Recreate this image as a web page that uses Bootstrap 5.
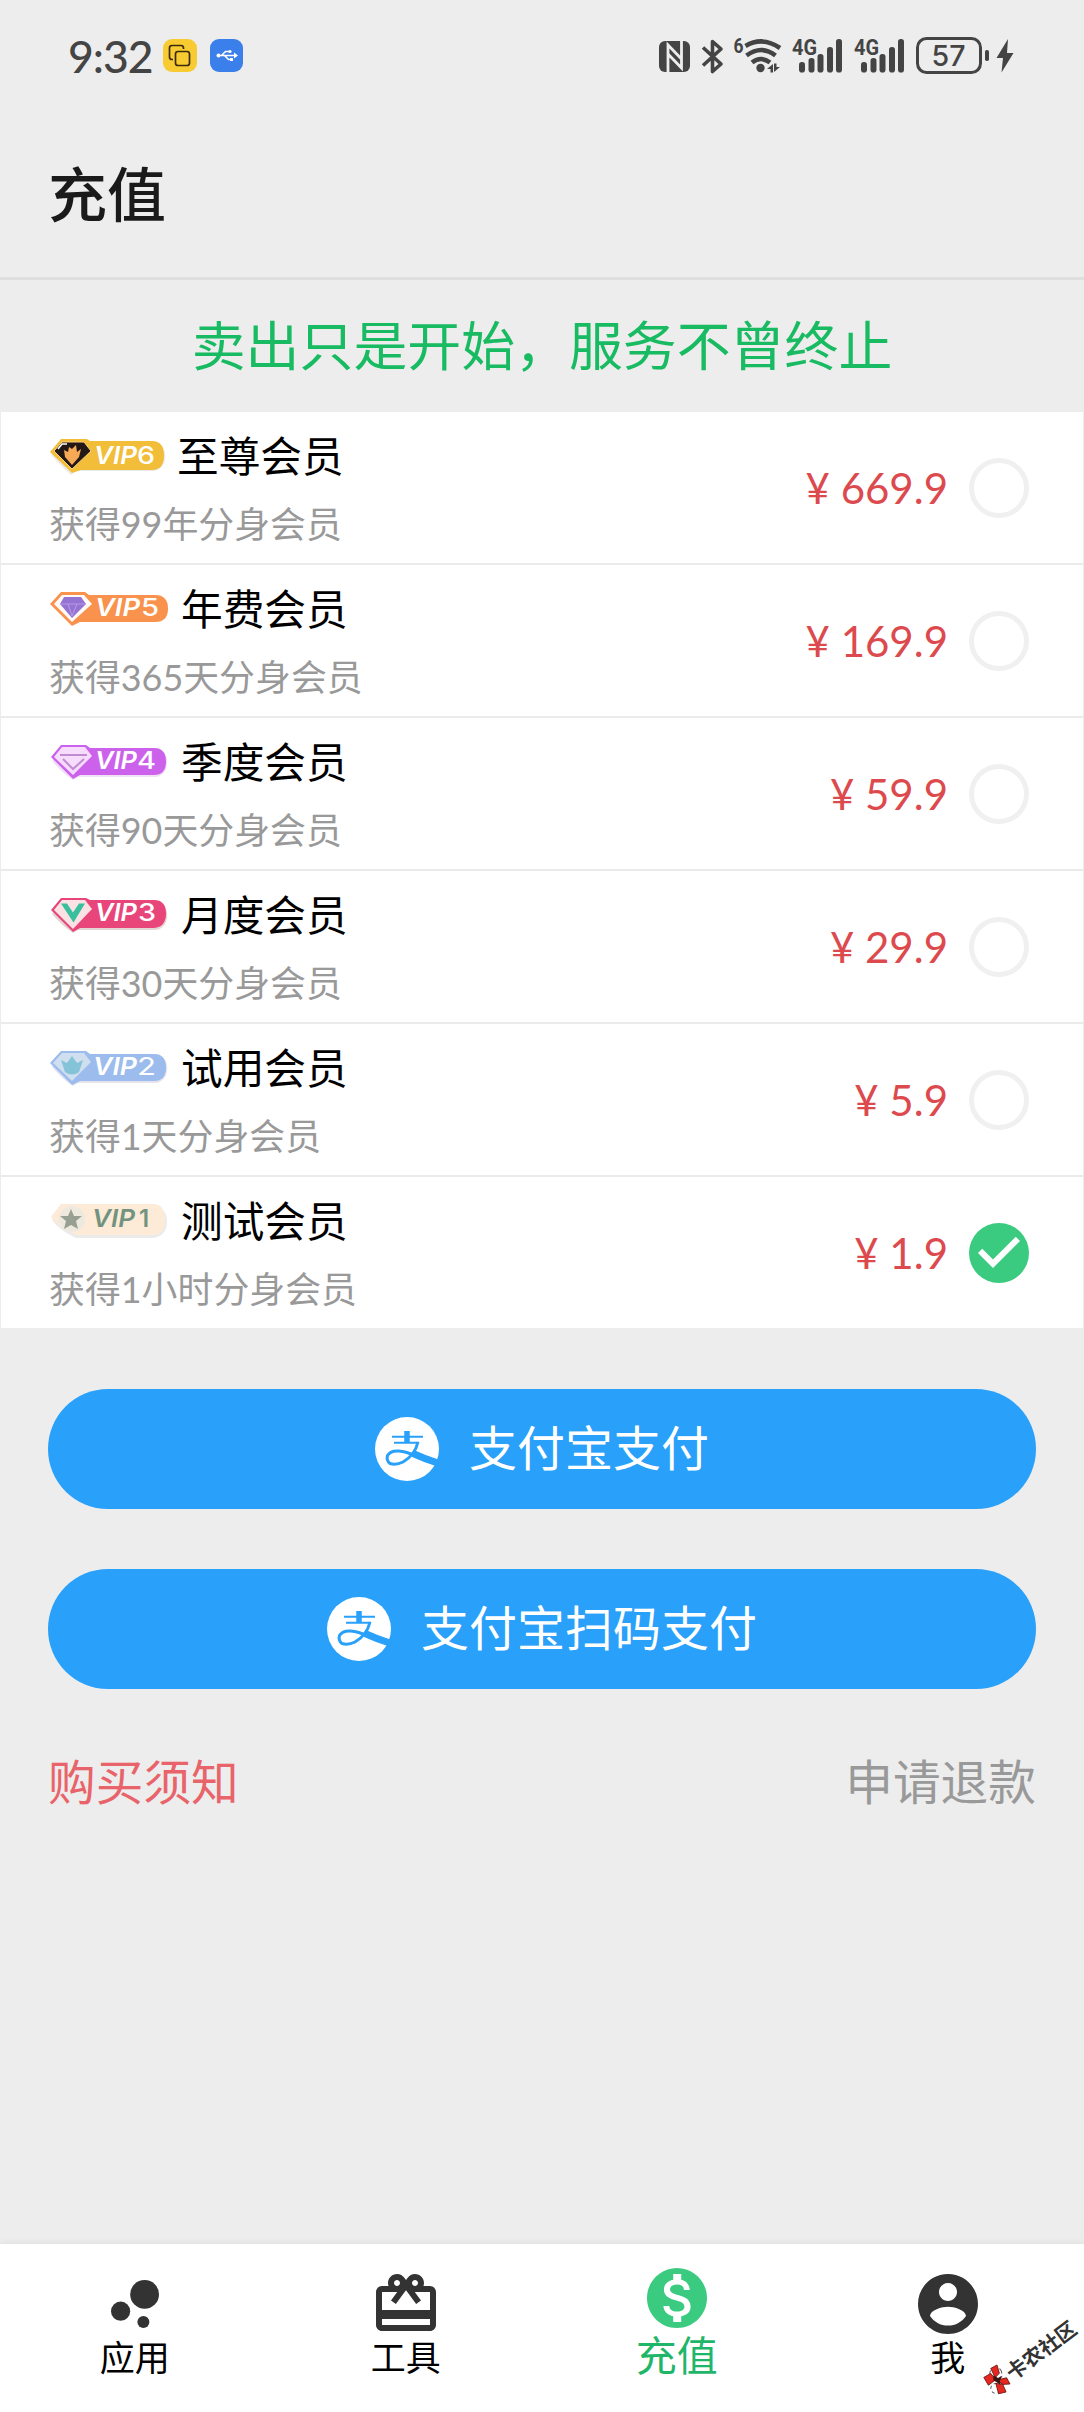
<!DOCTYPE html>
<html lang="zh-CN">
<head>
<meta charset="utf-8">
<meta name="viewport" content="width=device-width, initial-scale=1">
<title>充值</title>
<link href="https://cdn.jsdelivr.net/npm/bootstrap@5.3.0/dist/css/bootstrap.min.css" rel="stylesheet">
<style>
  body { background: #ededed; font-family: Lato, "Noto Sans CJK SC", sans-serif; color: #000; line-height: 1; }
  .screen { width: 1084px; height: 2412px; overflow: hidden; }
  svg { display: block; flex: none; }
  .status-bar { height: 114px; padding: 0 70px 2px 68px; color: #444; }
  .clock { font-size: 44.5px; font-weight: 500; letter-spacing: -1px; width: 95px; }
  .app-title { height: 166px; padding: 0 48px 3px; border-bottom: 3px solid #dfdfdf; font-size: 59px; font-weight: 500; color: #1a1a1a; }
  .slogan { height: 132px; font-size: 53.9px; color: #18bb62; }
  .plans { padding: 0 1px; background: #ececec; }
  .plan { height: 153px; background: #fff; border-bottom: 2px solid #ebebeb; padding: 0 54px 0 48px; }
  .plan:last-child { border-bottom: 0; height: 151px; }
  .plan-name { font-size: 41.7px; line-height: 60px; margin-top: 5px; }
  .plan-name span { margin-left: -1px; }
  .plan-desc { font-size: 35.9px; line-height: 50px; color: #999; margin-top: 14px; margin-bottom: 4px; }
  .plan-price { font-size: 42px; color: #dc4a4e; }
  .ring { width: 60px; height: 60px; border: 5px solid #f0f0f0; border-radius: 50%; margin: 0 0 0 21px; }
  .check-mark { width: 72px; height: 72px; margin: 0 -6px 0 15px; }
  .pay { height: 120px; background: #29a0fa; color: #fff; font-size: 48px; gap: 30px; border: 0; }
  .pay span { margin-top: -2px; }
  .notice { font-size: 47.7px; }
  .tabs { height: 168px; background: #fff; box-shadow: 0 -2px 6px rgba(0,0,0,.05); }
  .tab { padding-top: 24px; padding-right: 1.500px; font-size: 35px; line-height: 34px; }
  .tab.on { padding-top: 18px; font-size: 41px; line-height: 43px; color: #1fb669; }
  .tab.on svg { color: #3bcb80; }
  .tab svg { color: #333; }
  .stamp { left: 980px; top: 2312px; }
</style>
</head>
<body>
<div class="screen position-relative d-flex flex-column">

  <div class="status-bar d-flex align-items-center">
    <span class="clock">9:32</span>
    <svg width="82" height="36" viewBox="0 0 82 36">
      <rect x="0" y="1" width="34" height="33" rx="9" fill="#f9cb33"/>
      <g fill="none" stroke="#3a2c0a" stroke-width="1.7"><path d="M10 21.500h-1q-2.500 0-2.500-2.500V10q0-2.500 2.500-2.500h9q2.500 0 2.500 2.500v1"/><rect x="12.500" y="13.500" width="14" height="14" rx="2.500"/></g>
      <rect x="47" y="1" width="33" height="33" rx="9" fill="#3b80ea"/>
      <g fill="none" stroke="#fff" stroke-width="1.600"><path d="M55 17.500h17M58.500 17.500l4-4h3.500M61.500 17.500l4 4h3"/></g>
      <path d="M71 14.500l4 3-4 3z" fill="#fff"/><circle cx="55.500" cy="17.500" r="2" fill="#fff"/><circle cx="67" cy="13.500" r="1.600" fill="#fff"/><rect x="67" y="20" width="3" height="3" fill="#fff"/>
    </svg>
    <svg class="ms-auto" width="356" height="40" viewBox="658 36 356 40" fill="#444">
      <rect x="659" y="41" width="31" height="31" rx="6"/>
      <g fill="none" stroke="#ededed" stroke-width="2.800"><path d="M668 72V45l13.500 14v-2M681.500 41v27L668 54"/></g>
      <path d="M703 47.500l18 16.500-8.500 7.500v-30l8.500 7.500-18 16.500" fill="none" stroke="#444" stroke-width="3.600" stroke-linejoin="round"/>
      <text x="733.500" y="53" font-family="Roboto" font-size="21" font-weight="700" textLength="10" lengthAdjust="spacingAndGlyphs">6</text>
      <g fill="none" stroke="#444" stroke-width="4.600"><path d="M745.500 46q17-10 34.500 2"/><path d="M746.500 55.500q15-11 29 0"/><path d="M752 62.500q9-7 18 0"/></g>
      <circle cx="760.500" cy="68" r="4.200"/>
      <path d="M767 69l6-5v8.500h-2.500V69zM780 67l-6 5v-8.500h2.500V67z"/>
      <g id="sig">
        <text x="792" y="55" font-family="Roboto" font-size="22" font-weight="700" textLength="25" lengthAdjust="spacingAndGlyphs">4G</text>
        <rect x="799" y="62" width="6" height="10.500" rx="2.800"/><rect x="808.500" y="58" width="6" height="14.500" rx="2.800"/><rect x="817.500" y="54" width="6" height="18.500" rx="2.800"/><rect x="827" y="47" width="6" height="25.500" rx="2.800"/><rect x="836" y="39" width="6" height="33.500" rx="2.800"/>
      </g>
      <use href="#sig" x="62"/>
      <rect x="917.500" y="38.500" width="63" height="34" rx="9" fill="none" stroke="#444" stroke-width="3"/>
      <text x="931.500" y="66" font-family="Inter" font-size="29" font-weight="500" textLength="34" lengthAdjust="spacingAndGlyphs">57</text>
      <rect x="985" y="50" width="4" height="11" rx="1.800"/>
      <path d="M1008 39l-11.500 19h6.500l-1.500 14.500 12-19.500h-6.500z"/>
    </svg>
  </div>

  <header class="app-title d-flex align-items-center">充值</header>
  <div class="slogan d-flex align-items-center justify-content-center">卖出只是开始，服务不曾终止</div>

  <main class="flex-grow-1">
    <div class="plans">
      <div class="plan d-flex align-items-center">
        <div class="me-auto">
          <div class="plan-name d-flex align-items-center">
            <svg class="me-2" width="121" height="42" viewBox="0 0 121 42">
              <path d="M12 7h92a11 13 0 0 1 0 29H27l-5 4Q12 31 2 20z" fill="#aaa" opacity=".25"/>
              <path d="M12 4H38l3 2h62q12 0 12 14.500T103 35H32l-9 3L1 17z" fill="#f2bd38"/>
              <path d="M13 7h22l7 9-19 18L5 16z" fill="#241817" stroke="#fbd27c" stroke-width="1"/>
              <path d="M15 15l4 2 1-5 3 2 4-4 1 7 4-3-2 8-7 8-7-8z" fill="#f7aa55"/>
              <path d="M9 14l4-5 5 0" fill="none" stroke="#fff" stroke-width="1.500"/>
              <text x="45" y="28.500" font-family="Inter" font-size="24" font-weight="600" font-style="italic" fill="#fff" textLength="43" lengthAdjust="spacingAndGlyphs">VIP</text>
              <text x="88" y="28.500" font-family="Inter" font-size="24" font-weight="500" fill="#fff" textLength="18" lengthAdjust="spacingAndGlyphs">6</text>
            </svg>
            <span>至尊会员</span>
          </div>
          <div class="plan-desc">获得99年分身会员</div>
        </div>
        <span class="plan-price">¥ 669.9</span><span class="ring"></span>
      </div>

      <div class="plan d-flex align-items-center">
        <div class="me-auto">
          <div class="plan-name d-flex align-items-center">
            <svg class="me-2" width="125" height="42" viewBox="0 0 125 42">
              <path d="M12 4H36l4 3h66q13 0 13 13.500T106 34H31l-8 4L1 16z" fill="#f8924c"/>
              <path d="M13 7h22l8 9-20 18L5 16z" fill="#fffaf7"/>
              <path d="M15 9h17l5 7-14 14-12-14z" fill="#9573d3"/><path d="M11 16h26M19 16l4 12 5-12" fill="none" stroke="#b79be4" stroke-width="1"/>
              <text x="46" y="28" font-family="Inter" font-size="24" font-weight="600" font-style="italic" fill="#fff" textLength="45" lengthAdjust="spacingAndGlyphs">VIP</text>
              <text x="92" y="28" font-family="Inter" font-size="24" font-weight="500" fill="#fff" textLength="18" lengthAdjust="spacingAndGlyphs">5</text>
            </svg>
            <span>年费会员</span>
          </div>
          <div class="plan-desc">获得365天分身会员</div>
        </div>
        <span class="plan-price">¥ 169.9</span><span class="ring"></span>
      </div>

      <div class="plan d-flex align-items-center">
        <div class="me-auto">
          <div class="plan-name d-flex align-items-center">
            <svg class="me-2" width="125" height="42" viewBox="0 0 125 42">
              <path d="M14 7h92a11 13 0 0 1 0 29H29l-5 3Q12 31 3 20z" fill="#c58bd5" opacity=".25"/>
              <path d="M12 4H37l4 3h64q12 0 12 13.500T105 34H31l-7 4L2 16z" fill="#cc62ec"/>
              <path d="M13 6h23l7 9-19 19L5 16z" fill="#f8dcfd"/>
              <path d="M11 14h27M14 18l10 10 11-10" fill="none" stroke="#c18bd2" stroke-width="2"/>
              <text x="46" y="28" font-family="Inter" font-size="24" font-weight="600" font-style="italic" fill="#fff" textLength="42" lengthAdjust="spacingAndGlyphs">VIP</text>
              <text x="88" y="28" font-family="Inter" font-size="24" font-weight="500" fill="#fff" textLength="19" lengthAdjust="spacingAndGlyphs">4</text>
            </svg>
            <span>季度会员</span>
          </div>
          <div class="plan-desc">获得90天分身会员</div>
        </div>
        <span class="plan-price">¥ 59.9</span><span class="ring"></span>
      </div>

      <div class="plan d-flex align-items-center">
        <div class="me-auto">
          <div class="plan-name d-flex align-items-center">
            <svg class="me-2" width="125" height="42" viewBox="0 0 125 42">
              <path d="M14 7h92a11 13 0 0 1 0 29H29l-5 3Q12 31 3 20z" fill="#aa7777" opacity=".3"/>
              <path d="M12 4H37l4 2h64q12 0 12 13.500T105 34H31l-7 4L2 16z" fill="#e8457b"/>
              <path d="M13 6h23l7 9-19 20L5 16z" fill="#f9e1e4"/>
              <path d="M12 9.500h6l6 9 6-9h6L24.500 28.500z" fill="#38bf9d"/>
              <text x="46" y="27" font-family="Inter" font-size="24" font-weight="600" font-style="italic" fill="#fff" textLength="42" lengthAdjust="spacingAndGlyphs">VIP</text>
              <text x="89" y="27" font-family="Inter" font-size="24" font-weight="500" fill="#fff" textLength="18" lengthAdjust="spacingAndGlyphs">3</text>
            </svg>
            <span>月度会员</span>
          </div>
          <div class="plan-desc">获得30天分身会员</div>
        </div>
        <span class="plan-price">¥ 29.9</span><span class="ring"></span>
      </div>

      <div class="plan d-flex align-items-center">
        <div class="me-auto">
          <div class="plan-name d-flex align-items-center">
            <svg class="me-2" width="125" height="42" viewBox="0 0 125 42">
              <path d="M14 7h92a11 13 0 0 1 0 29H29l-5 3Q12 31 3 20z" fill="#bdb9d5" opacity=".4"/>
              <path d="M12 4H37l4 3h64q12 0 12 13.500T105 34H31l-8 4L1 16z" fill="#9bbcec"/>
              <path d="M13 6h22l7 9-19 19L4 16z" fill="#cfdfef"/>
              <path d="M12 13l6 3 5-7 5 7 6-3-4 12q-7 5-14 0z" fill="#85c3d8"/>
              <text x="44" y="28" font-family="Inter" font-size="24" font-weight="600" font-style="italic" fill="#fff" textLength="44" lengthAdjust="spacingAndGlyphs">VIP</text>
              <text x="88" y="28" font-family="Inter" font-size="24" font-weight="400" fill="#fff" textLength="19" lengthAdjust="spacingAndGlyphs">2</text>
            </svg>
            <span>试用会员</span>
          </div>
          <div class="plan-desc">获得1天分身会员</div>
        </div>
        <span class="plan-price">¥ 5.9</span><span class="ring"></span>
      </div>

      <div class="plan d-flex align-items-center">
        <div class="me-auto">
          <div class="plan-name d-flex align-items-center">
            <svg class="me-2" width="125" height="42" viewBox="0 0 125 42">
              <path d="M12 7h92q14 0 14 14.500T104 38H27Q10 30 3 20z" fill="#ddd" opacity=".6"/>
              <path d="M12 4h92q12 0 12 15.500T104 35H28Q10 28 2 17z" fill="#fdebd8"/>
              <circle cx="23" cy="19" r="13" fill="#eee9df"/>
              <path d="M22 9l3 7 8 0-6 5 2 8-7-4-7 4 2-8-6-5h8z" fill="#97a093"/>
              <text x="43" y="27" font-family="Inter" font-size="24" font-weight="600" font-style="italic" fill="#71937f" textLength="43" lengthAdjust="spacingAndGlyphs">VIP</text>
              <text x="90" y="27" font-family="Inter" font-size="24" font-weight="600" fill="#71937f">1</text>
            </svg>
            <span>测试会员</span>
          </div>
          <div class="plan-desc">获得1小时分身会员</div>
        </div>
        <span class="plan-price">¥ 1.9</span>
        <svg class="check-mark" viewBox="0 0 24 24"><circle cx="12" cy="12" r="10" fill="#3bcb80"/><path d="M10 17l-5-5 1.410-1.410L10 14.170l7.590-7.590L19 8z" fill="#fff"/></svg>
      </div>
    </div>

    <div class="px-5 d-flex flex-column" style="padding-top:61px">
      <button class="pay rounded-pill d-flex align-items-center justify-content-center w-100 p-0">
        <svg width="64" height="64" viewBox="0 0 64 64">
          <circle cx="32" cy="32" r="32" fill="#fff"/>
          <g id="ali" fill="none" stroke="#29a0fa"><path d="M17 19.800h31M19 25.800h25" stroke-width="2"/><path d="M32 14v11" stroke-width="5.500"/><path d="M43 25q-3 13-15 20-7 3.500-13 1.500-4-3-2.500-8 3-5 11-4.500 8 .5 17 5" stroke-width="3"/><path d="M38 36.500q12 5.500 26 10" stroke-width="7"/></g>
        </svg>
        <span>支付宝支付</span>
      </button>
      <button class="pay rounded-pill d-flex align-items-center justify-content-center w-100 p-0" style="margin-top:60px">
        <svg width="64" height="64" viewBox="0 0 64 64"><circle cx="32" cy="32" r="32" fill="#fff"/><use href="#ali"/></svg>
        <span>支付宝扫码支付</span>
      </button>
      <div class="notice d-flex justify-content-between" style="margin-top:69px">
        <span style="color:#e9646a">购买须知</span><span style="color:#999">申请退款</span>
      </div>
    </div>
  </main>

  <nav class="tabs row g-0 text-center">
    <div class="tab col-3 d-flex flex-column align-items-center">
      <svg width="72" height="72" viewBox="0 0 24 24" fill="currentColor"><circle cx="7.200" cy="14.400" r="3.200"/><circle cx="14.800" cy="18" r="2"/><circle cx="15.200" cy="8.800" r="4.800"/></svg>
      <span>应用</span>
    </div>
    <div class="tab col-3 d-flex flex-column align-items-center">
      <svg width="72" height="72" viewBox="0 0 24 24" fill="currentColor"><path d="M20 6h-2.180c.11-.31.18-.65.18-1 0-1.660-1.340-3-3-3-1.050 0-1.960.54-2.500 1.350l-.5.67-.5-.68C10.960 2.540 10.050 2 9 2 7.340 2 6 3.340 6 5c0 .35.07.69.18 1H4c-1.110 0-1.990.89-1.990 2L2 19c0 1.110.89 2 2 2h16c1.110 0 2-.89 2-2V8c0-1.110-.89-2-2-2zm-5-2c.55 0 1 .45 1 1s-.45 1-1 1-1-.45-1-1 .45-1 1-1zM9 4c.55 0 1 .45 1 1s-.45 1-1 1-1-.45-1-1 .45-1 1-1zm11 15H4v-2h16v2zm0-5H4V8h5.080L7 10.830 8.620 12 11 8.760l1-1.360 1 1.360L15.380 12 17 10.830 14.920 8H20v6z"/></svg>
      <span>工具</span>
    </div>
    <div class="tab on col-3 d-flex flex-column align-items-center">
      <svg width="72" height="72" viewBox="0 0 24 24" fill="currentColor"><path d="M12 2C6.480 2 2 6.480 2 12s4.480 10 10 10 10-4.480 10-10S17.520 2 12 2zm1.410 16.090V20h-2.670v-1.930c-1.710-.36-3.160-1.460-3.270-3.400h1.960c.1 1.050.82 1.870 2.650 1.870 1.960 0 2.400-.98 2.400-1.590 0-.83-.44-1.610-2.670-2.140-2.480-.6-4.180-1.620-4.180-3.670 0-1.720 1.390-2.840 3.110-3.210V4h2.670v1.950c1.860.45 2.790 1.860 2.850 3.390H14.300c-.05-1.110-.64-1.870-2.220-1.870-1.500 0-2.400.68-2.400 1.640 0 .84.65 1.390 2.670 1.910s4.180 1.390 4.180 3.910c-.01 1.830-1.380 2.830-3.120 3.160z"/></svg>
      <span>充值</span>
    </div>
    <div class="tab col-3 d-flex flex-column align-items-center">
      <svg width="72" height="72" viewBox="0 0 24 24" fill="currentColor"><path fill-rule="evenodd" d="M12 2C6.480 2 2 6.480 2 12s4.480 10 10 10 10-4.480 10-10S17.520 2 12 2zm0 3c1.660 0 3 1.340 3 3s-1.340 3-3 3-3-1.340-3-3 1.340-3 3-3zm0 14.200c-2.500 0-4.710-1.280-6-3.220.03-1.990 4-3.080 6-3.080 1.990 0 5.970 1.090 6 3.080-1.290 1.940-3.500 3.220-6 3.220z"/></svg>
      <span>我</span>
    </div>
  </nav>

  <!-- community stamp laid over the tab bar -->
  <svg class="stamp position-absolute" width="104" height="90" viewBox="980 2312 104 90">
    <g transform="translate(997 2380) rotate(-37)">
      <circle cx="3" cy="-6" r="6" fill="#fff" stroke="#555" stroke-width="1" stroke-dasharray="4 3"/><circle cx="-6" cy="6" r="5" fill="#fff" stroke="#555" stroke-width="1" stroke-dasharray="3 3"/>
      <g fill="#e5271f" stroke="#6d1512" stroke-width=".8"><path d="M-9-10l8 1 0 8-9 0z"/><path d="M2-13l7 1-3 8-6 1z"/><path d="M0 0l9 4-1 7-6-4z"/><path d="M-3 2l5 5-2 8-7-3z"/></g>
      <path d="M-3-2l3-4 2 5 5 1-5 2-2 4z" fill="#3b1514"/>
    </g>
    <text transform="translate(1016.500 2368.500) rotate(-37)" x="-10.500" y="8" font-family="Noto Sans CJK SC" font-size="20.500" font-weight="700" fill="#333">卡农社区</text>
  </svg>
</div>
<script src="https://cdn.jsdelivr.net/npm/bootstrap@5.3.0/dist/js/bootstrap.bundle.min.js"></script>
</body>
</html>
